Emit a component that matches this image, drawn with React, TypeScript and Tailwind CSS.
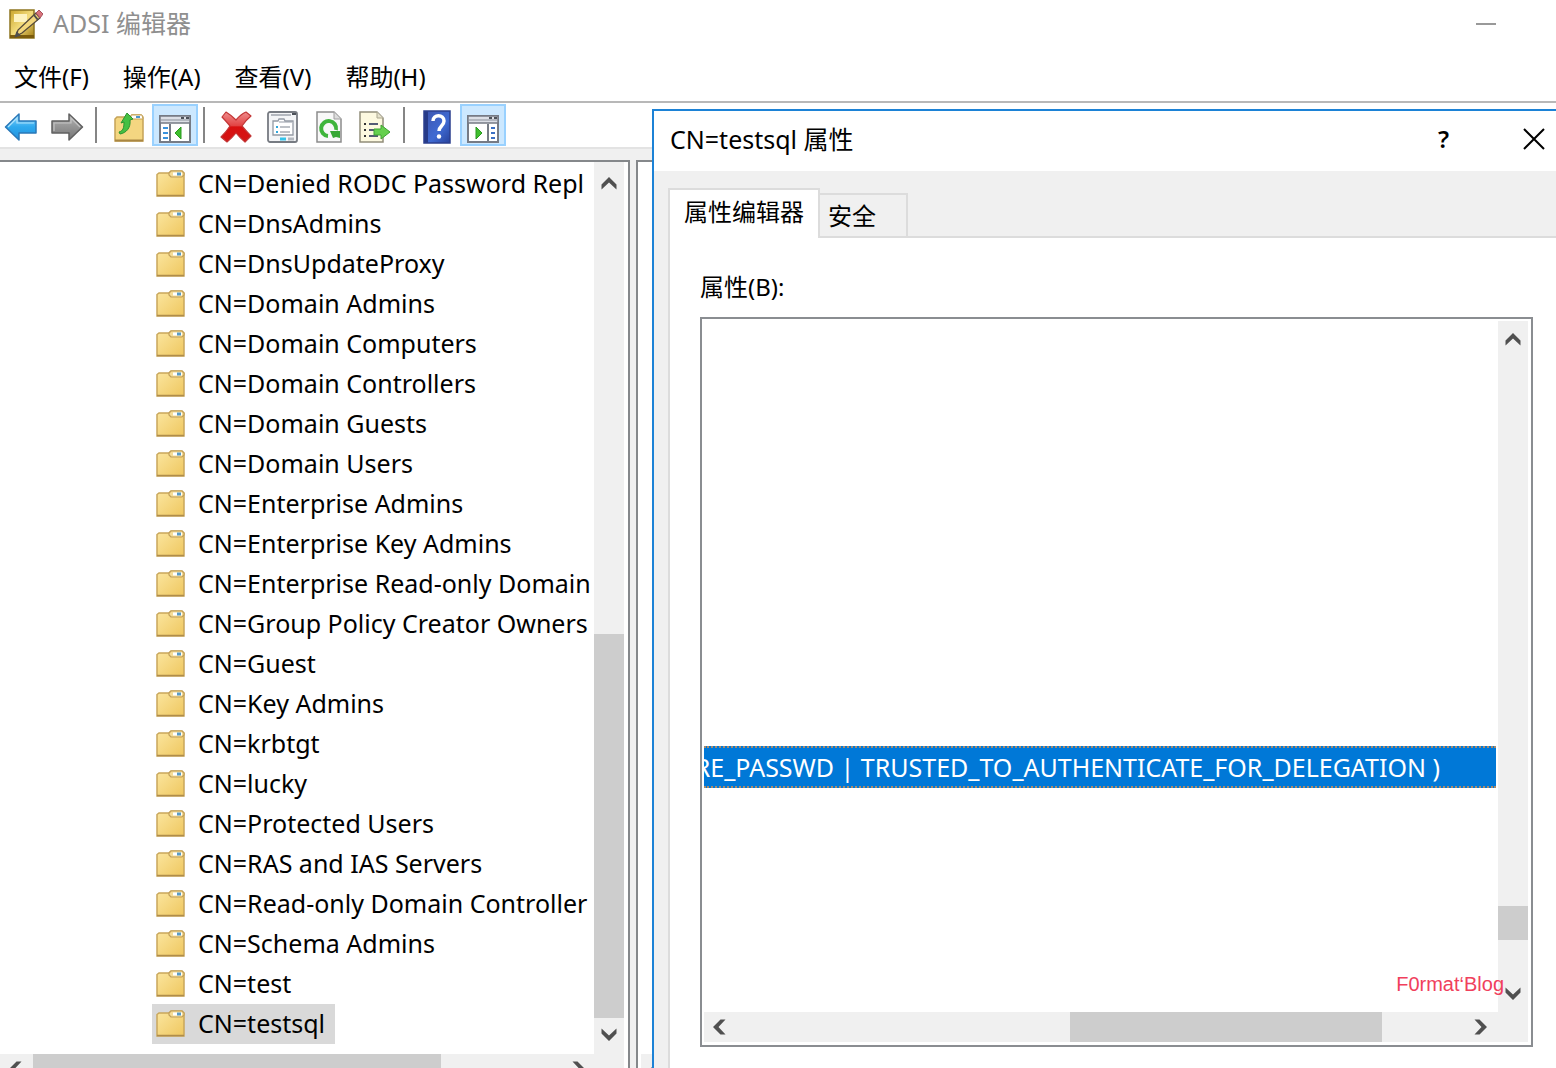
import type { ReactNode } from 'react';

const treeItems = [
  'CN=Denied RODC Password Repl',
  'CN=DnsAdmins',
  'CN=DnsUpdateProxy',
  'CN=Domain Admins',
  'CN=Domain Computers',
  'CN=Domain Controllers',
  'CN=Domain Guests',
  'CN=Domain Users',
  'CN=Enterprise Admins',
  'CN=Enterprise Key Admins',
  'CN=Enterprise Read-only Domain',
  'CN=Group Policy Creator Owners',
  'CN=Guest',
  'CN=Key Admins',
  'CN=krbtgt',
  'CN=lucky',
  'CN=Protected Users',
  'CN=RAS and IAS Servers',
  'CN=Read-only Domain Controller',
  'CN=Schema Admins',
  'CN=test',
  'CN=testsql',
];

const menus = ['文件(F)', '操作(A)', '查看(V)', '帮助(H)'];

function Chevron({ dir }: { dir: 'up' | 'down' | 'left' | 'right' }) {
  const paths = {
    up: 'M.5 9.500 8 2l7.500 7.500v5L8 7.500.5 14.500z',
    down: 'M.5 6.500 8 14l7.500-7.500v-5L8 8.500.5 1.500z',
    left: 'M9.500.5 2 8l7.500 7.500h5L7.500 8l7-7.500z',
    right: 'M6.500.5 14 8l-7.500 7.500h-5L8.500 8l-7-7.500z',
  };
  return (
    <svg width="16" height="16" viewBox="0 0 16 16" fill="#505050">
      <path d={paths[dir]} />
    </svg>
  );
}

function ScrollButton({ dir, label }: { dir: 'up' | 'down' | 'left' | 'right'; label: string }) {
  return (
    <button aria-label={label} className="flex size-[30px] shrink-0 items-center justify-center">
      <Chevron dir={dir} />
    </button>
  );
}

function FolderIcon() {
  return (
    <svg width="30" height="30" viewBox="0 -2 30 30" className="shrink-0">
      <defs>
        <linearGradient id="folder" x1="0" y1="0" x2="1" y2="1">
          <stop offset="0" stopColor="#fbe6a0" />
          <stop offset="1" stopColor="#efc75f" />
        </linearGradient>
      </defs>
      <path d="M1 4.500 3 3h10l2-2h11l2 2v23H1z" fill="url(#folder)" stroke="#c9a75b" strokeWidth="1.500" />
      <path d="M13 3l2-2h11l2 2v2l-2 2H15l-2-2z" fill="#f5dc96" stroke="#c2a05a" strokeWidth="1.200" />
      <rect x="17" y="2.500" width="9" height="3" fill="#fff" />
      <rect x="21" y="2.500" width="4" height="3" fill="#5b9bc4" />
      <path d="M1 25.500h27" stroke="#b08d4a" strokeWidth="1.500" />
    </svg>
  );
}

function AppIcon() {
  return (
    <svg width="34" height="32" viewBox="0 0 34 32">
      <defs>
        <linearGradient id="pad" x1="0" y1="0" x2="1" y2="1">
          <stop offset="0" stopColor="#c9a52c" />
          <stop offset=".5" stopColor="#f3dc7c" />
          <stop offset="1" stopColor="#a07a10" />
        </linearGradient>
      </defs>
      <path d="M1 2h24v28H1z" fill="url(#pad)" stroke="#8f7620" strokeWidth="1.500" />
      <path d="M5 6h13v8H5z" fill="#fdf3c0" />
      <path d="M1 27h24v3H1z" fill="#7c5c0c" />
      <path d="M27 5l4 5L13 25l-6 3 2-6z" fill="#f3d77c" stroke="#54493a" strokeWidth="1.300" />
      <path d="M25 7l4 5M7 28l3-1-2-2z" stroke="#4e4e4e" strokeWidth="2" />
      <path d="M27 5l3-3 4 4-3 4z" fill="#d9737c" stroke="#a5525c" />
    </svg>
  );
}

function BackIcon() {
  return (
    <svg width="34" height="30" viewBox="0 0 34 30">
      <defs>
        <linearGradient id="back" x1="0" y1="0" x2="0" y2="1">
          <stop offset="0" stopColor="#8bd6fb" />
          <stop offset=".5" stopColor="#2ea9ee" />
          <stop offset="1" stopColor="#2491dc" />
        </linearGradient>
      </defs>
      <path d="M1.500 15 15 2v7h17v12H15v7z" fill="url(#back)" stroke="#2a78b8" strokeWidth="1.500" strokeLinejoin="round" />
      <path d="M4 15l9-9v5h17" fill="none" stroke="#aee2fb" strokeWidth="1.200" />
    </svg>
  );
}

function ForwardIcon() {
  return (
    <svg width="34" height="30" viewBox="0 0 34 30">
      <defs>
        <linearGradient id="fwd" x1="0" y1="0" x2="0" y2="1">
          <stop offset="0" stopColor="#b4b4b4" />
          <stop offset="1" stopColor="#757575" />
        </linearGradient>
      </defs>
      <path d="M32.500 15 19 2v7H2v12h17v7z" fill="url(#fwd)" stroke="#606060" strokeWidth="1.500" strokeLinejoin="round" />
      <path d="M4 19v-8h17V6l9 9" fill="none" stroke="#c4c4c4" strokeWidth="1.200" />
    </svg>
  );
}

function UpFolderIcon() {
  return (
    <svg width="30" height="30" viewBox="0 0 30 30">
      <path d="M1 7 3 5h13l2-2h9l2 2v24H1z" fill="#f4d681" stroke="#c5a257" strokeWidth="1.500" />
      <path d="M17 3h11l1 4H17z" fill="#fff" stroke="#c5a257" />
      <rect x="22" y="4" width="4" height="2" fill="#4b95cf" />
      <path d="M1 28.500h28" stroke="#a98642" strokeWidth="2" />
      <path d="M5 20c4-1 5-4 5-10l-3 1 6-10 6 6-3 1c1 8-4 13-10 14z" fill="#45c043" stroke="#2c9430" />
    </svg>
  );
}

function PaneIcon({ side }: { side: 'left' | 'right' }) {
  return (
    <svg width="32" height="28" viewBox="0 0 32 28">
      <path d="M1 1h30v26H1z" fill="#fff" stroke="#767b85" strokeWidth="2" />
      <path d="M1 1h30v7H1z" fill="#dcdfe6" stroke="#767b85" strokeWidth="1.500" />
      <path d="M2 5h28" stroke="#8a8f99" />
      <path d="M22 3h3M27 3h3" stroke="#4c5159" strokeWidth="2" />
      {side === 'left' ? (
        <>
          <path d="M11 9v18" stroke="#767b85" strokeWidth="2" />
          <path d="M4 13h5M4 18h5M4 23h5" stroke="#3a92dd" strokeWidth="2" />
          <path d="M22 12v12l-6-6z" fill="#3fbf2e" stroke="#2a9720" />
        </>
      ) : (
        <>
          <path d="M21 9v18" stroke="#767b85" strokeWidth="2" />
          <path d="M24 13h4M24 18h4M24 23h4" stroke="#3a6fc4" strokeWidth="2" />
          <path d="M9 12v12l6-6z" fill="#3fbf2e" stroke="#2a9720" />
        </>
      )}
    </svg>
  );
}

function DeleteIcon() {
  return (
    <svg width="34" height="34" viewBox="0 0 34 34">
      <defs>
        <linearGradient id="del" x1="0" y1="0" x2="0" y2="1">
          <stop offset="0" stopColor="#ef8d8d" />
          <stop offset=".45" stopColor="#e24444" />
          <stop offset=".5" stopColor="#d80f0f" />
          <stop offset="1" stopColor="#d41515" />
        </linearGradient>
      </defs>
      <path
        d="M6 2q5 3 10 8 5-6 10-8l5 4q-5 4-9 10 5 6 9 10l-6 6q-5-4-9-9-4 5-9 9l-6-5q5-5 9-11-5-6-8-9z"
        fill="url(#del)"
        stroke="#c23636"
        strokeWidth="1.200"
        strokeLinejoin="round"
      />
    </svg>
  );
}

function PropertiesIcon() {
  return (
    <svg width="32" height="34" viewBox="0 0 32 34">
      <rect x="1" y="2" width="29" height="30" rx="2" fill="#f4f5f7" stroke="#777b82" strokeWidth="1.800" />
      <path d="M4 5h20" stroke="#b4b8bf" strokeWidth="2" />
      <path d="M25 4h4" stroke="#4c5159" strokeWidth="2" />
      <path d="M6 11h5l1-2h5l1 2h8v14H6z" fill="#fff" stroke="#949aa5" strokeWidth="1.300" />
      <path d="M12 12h13" stroke="#949aa5" />
      <path d="M9 17h2M9 22h2" stroke="#2fa6dc" strokeWidth="2" />
      <path d="M13 17h10M13 22h10" stroke="#a8adb5" strokeWidth="1.500" />
      <path d="M13 29h6" stroke="#35c3ea" strokeWidth="3" />
      <path d="M21 29h6" stroke="#b4b8bf" strokeWidth="3" />
    </svg>
  );
}

function RefreshIcon() {
  return (
    <svg width="28" height="34" viewBox="0 0 28 34">
      <path d="M2 2h17l7 7v23H2z" fill="#f8f8f8" stroke="#8c8c8c" strokeWidth="1.500" />
      <path d="M19 2v7h7" fill="#ddd" stroke="#a0a0a0" />
      <path d="M13 26a7.500 7.500 0 1 1 8-6" fill="none" stroke="#3fb53c" strokeWidth="4" />
      <path d="M15 21h10v7l-4-1-3 1z" fill="#37a835" />
    </svg>
  );
}

function ExportIcon() {
  return (
    <svg width="34" height="34" viewBox="0 0 34 34">
      <path d="M2 2h17l6 6v24H2z" fill="#fdf9e0" stroke="#918d7a" strokeWidth="1.500" />
      <path d="M19 2v6h6" fill="#e6e2cc" stroke="#aaa68e" />
      <path d="M6 14h2M6 20h2M6 26h2" stroke="#333" strokeWidth="2" />
      <path d="M11 14h9M11 20h6M11 26h9" stroke="#555b75" strokeWidth="1.800" />
      <path d="M16 19h7v-4l9 7-9 7v-4h-7z" fill="#66d04e" stroke="#3ea332" />
    </svg>
  );
}

function HelpIcon() {
  return (
    <svg width="28" height="34" viewBox="0 0 28 34">
      <defs>
        <linearGradient id="help" x1="0" y1="0" x2="1" y2="1">
          <stop offset="0" stopColor="#3d54ae" />
          <stop offset=".6" stopColor="#3f6ad2" />
          <stop offset="1" stopColor="#27429c" />
        </linearGradient>
      </defs>
      <path d="M1 1h26v32H1z" fill="url(#help)" />
      <path d="M1 1h4v32H1z" fill="#263a88" />
      <path d="M1 1h26v32H1z" fill="none" stroke="#2b3f8f" strokeWidth="1.500" />
      <path d="M10 11c0-7 11-7 11 0 0 5-5 5-5 10" fill="none" stroke="#fff" strokeWidth="3.500" />
      <circle cx="16" cy="26.500" r="2.200" fill="#fff" />
    </svg>
  );
}

function ToolButton({ label, active, children }: { label: string; active?: boolean; children: ReactNode }) {
  return (
    <button
      aria-label={label}
      className={
        active
          ? 'flex h-[42px] w-[46px] shrink-0 items-center justify-center border-2 border-[#99d1ff] bg-[#cce8ff] pt-2'
          : 'flex h-[42px] w-[46px] shrink-0 items-center justify-center pt-1'
      }
    >
      {children}
    </button>
  );
}

function Separator() {
  return <div className="ml-[5px] mr-[9px] h-9 w-0.5 shrink-0 bg-[#858585]" />;
}

function PropertiesDialog() {
  return (
    <section
      aria-label="CN=testsql 属性"
      className="absolute left-[652px] right-0 top-[109px] border-l-2 border-t-2 border-[#1c82d6] bg-[#f0f0f0]"
    >
      <header className="flex h-[60px] items-center bg-white pl-4 pr-2">
        <h2 className="flex-1 pb-1 text-[25px]">CN=testsql 属性</h2>
        <button aria-label="帮助" className="w-[90px] pb-1 pl-2 text-left font-semibold">?</button>
        <button aria-label="关闭" className="flex w-7 justify-center pb-1">
          <svg width="22" height="22" viewBox="0 0 22 22" stroke="#000" strokeWidth="2">
            <path d="M1 1l20 20M21 1 1 21" />
          </svg>
        </button>
      </header>

      <div role="tablist" className="flex items-end pl-3.5 pt-[17px]">
        <button
          role="tab"
          aria-selected="true"
          className="z-10 -mb-0.5 h-[50px] w-[152px] border-2 border-b-0 border-[#dcdcdc] bg-white pb-1"
        >
          属性编辑器
        </button>
        <button
          role="tab"
          aria-selected="false"
          className="h-[43px] w-[88px] border-r-2 border-t-2 border-[#dcdcdc] pl-2 text-left"
        >
          安全
        </button>
      </div>

      <div className="ml-3.5 border-l-2 border-t-2 border-[#dcdcdc] bg-white pb-16 pl-[30px] pr-[23px] pt-[33px]">
        <div id="attributes-label" className="h-[46px]">属性(B):</div>
        <div className="border-2 border-[#8a8d91] p-0.5 pr-[3px] pb-[3px]">
          <div className="flex">
            <ul
              role="listbox"
              aria-labelledby="attributes-label"
              className="min-w-0 flex-1 pb-[224px] pr-0.5 pt-[425px]"
            >
              <li
                role="option"
                aria-selected="true"
                className="flex h-[42px] items-center justify-end overflow-hidden whitespace-nowrap border-y-2 border-dotted border-[#a98b6b] bg-[#0078d7] pr-14 text-[25px] text-white"
              >
                <span>RE_PASSWD | TRUSTED_TO_AUTHENTICATE_FOR_DELEGATION )</span>
              </li>
            </ul>
            <div className="relative flex w-[30px] flex-col bg-[#f0f0f0] py-[3px]">
              <ScrollButton dir="up" label="向上滚动" />
              <div className="flex-1" />
              <div className="mb-[39px] h-[34px] bg-[#cdcdcd]" />
              <ScrollButton dir="down" label="向下滚动" />
              <span className="absolute bottom-3.5 right-6 whitespace-nowrap font-['Liberation_Sans',sans-serif] text-xl leading-7 text-[#f0405c]">
                F0rmat‘Blog
              </span>
            </div>
          </div>
          <div className="flex bg-[#f0f0f0] pr-8">
            <ScrollButton dir="left" label="向左滚动" />
            <div className="flex-1" />
            <div className="mr-[84px] w-[312px] bg-[#cdcdcd]" />
            <ScrollButton dir="right" label="向右滚动" />
          </div>
        </div>
      </div>
    </section>
  );
}

export default function App() {
  return (
    <main className="relative h-screen overflow-hidden bg-white font-['Noto_Sans','Noto_Sans_CJK_SC',sans-serif] text-2xl leading-8 text-black">
      {/* Title bar */}
      <header className="flex h-12 items-center gap-2.5 pl-[9px] pr-[60px]">
        <AppIcon />
        <h1 className="flex-1 pb-0.5 text-[25px] text-[#8f8f8f]">ADSI 编辑器</h1>
        <button aria-label="最小化" className="flex h-8 w-5 items-center">
          <span className="h-0.5 w-5 bg-[#999]" />
        </button>
      </header>

      {/* Menu bar */}
      <nav className="flex h-[55px] gap-[34px] border-b-2 border-[#b8b8b8] pl-3.5 pt-[13px]">
        {menus.map((menu) => (
          <button key={menu} className="h-8">{menu}</button>
        ))}
      </nav>

      {/* Toolbar */}
      <div className="-ml-0.5 flex h-[46px] items-center border-b-2 border-[#e3e3e3]">
        <ToolButton label="后退"><BackIcon /></ToolButton>
        <ToolButton label="前进"><ForwardIcon /></ToolButton>
        <Separator />
        <ToolButton label="向上一级"><UpFolderIcon /></ToolButton>
        <ToolButton label="显示控制台树" active><PaneIcon side="left" /></ToolButton>
        <Separator />
        <ToolButton label="删除"><DeleteIcon /></ToolButton>
        <ToolButton label="属性"><PropertiesIcon /></ToolButton>
        <ToolButton label="刷新"><RefreshIcon /></ToolButton>
        <ToolButton label="导出列表"><ExportIcon /></ToolButton>
        <Separator />
        <ToolButton label="帮助"><HelpIcon /></ToolButton>
        <ToolButton label="显示操作窗格" active><PaneIcon side="right" /></ToolButton>
      </div>

      <div className="flex gap-1.5 bg-[#f0f0f0] pt-[11px]">
        {/* Console tree */}
        <div className="w-[630px] shrink-0 border-r-2 border-t-2 border-[#85888b] bg-white pr-1">
          <div className="flex">
            <ul role="tree" className="min-w-0 flex-1 overflow-hidden pb-2.5 pl-[152px] pt-0.5">
              {treeItems.map((item) => {
                const selected = item === 'CN=testsql';
                return (
                  <li
                    key={item}
                    role="treeitem"
                    aria-selected={selected}
                    className={
                      selected
                        ? 'flex h-10 w-max items-center gap-3 whitespace-nowrap bg-[#d9d9d9] pb-0.5 pl-1 pr-2.5 text-[25px]'
                        : 'flex h-10 w-max items-center gap-3 whitespace-nowrap pb-0.5 pl-1 text-[25px]'
                    }
                  >
                    <FolderIcon />
                    {item}
                  </li>
                );
              })}
            </ul>
            <div className="flex w-[30px] flex-col bg-[#f0f0f0] pt-1.5">
              <ScrollButton dir="up" label="向上滚动" />
              <div className="flex-1" />
              <div className="h-[384px] bg-[#cdcdcd]" />
              <div className="pb-1 pt-0.5"><ScrollButton dir="down" label="向下滚动" /></div>
            </div>
          </div>
          <div className="flex bg-[#f0f0f0] pr-[30px]">
            <ScrollButton dir="left" label="向左滚动" />
            <div className="ml-[3px] w-[408px] bg-[#cdcdcd]" />
            <div className="flex-1" />
            <ScrollButton dir="right" label="向右滚动" />
          </div>
        </div>

        {/* Details pane */}
        <div className="flex flex-1 flex-col justify-end border-l-2 border-t-2 border-[#85888b] bg-white pl-[3px]">
          <div className="bg-[#f0f0f0]">
            <ScrollButton dir="left" label="向左滚动" />
          </div>
        </div>
      </div>

      <PropertiesDialog />
    </main>
  );
}
